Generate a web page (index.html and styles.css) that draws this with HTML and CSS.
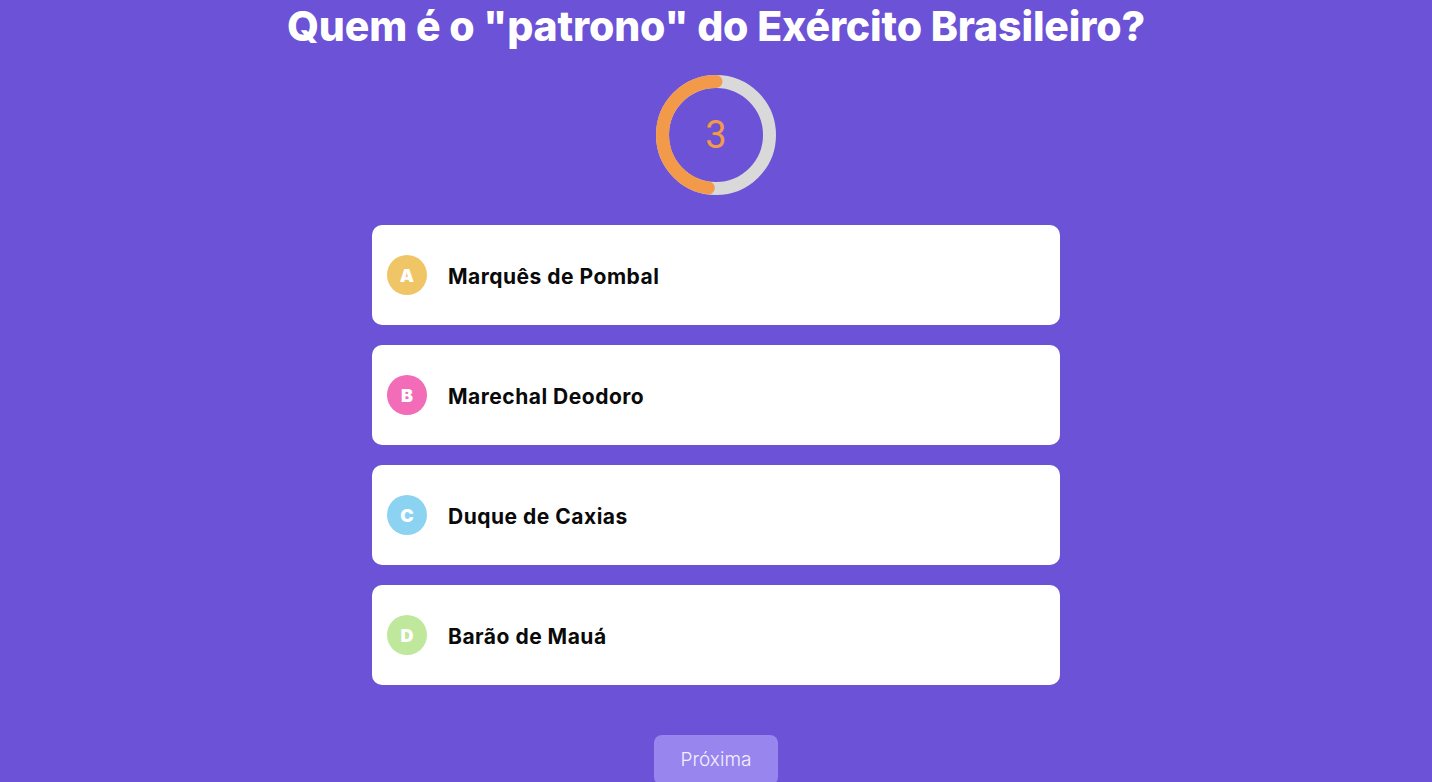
FILE: index.html
```html
<!DOCTYPE html>
<html lang="pt-BR">
<head>
<meta charset="utf-8">
<title>Quiz</title>
<link rel="stylesheet" href="styles.css">
</head>
<body>
<main class="quiz">
  <h1 class="question">Quem é o "patrono" do Exército Brasileiro?</h1>
  <div class="timer">
    <svg class="timer-ring" width="120" height="120" viewBox="0 0 120 120">
      <circle cx="60" cy="60" r="53.5" fill="none" stroke="#d9d9d9" stroke-width="13"/>
      <circle cx="60" cy="60" r="53.5" fill="none" stroke="#f2994a" stroke-width="13" stroke-linecap="round" stroke-dasharray="160 400" transform="translate(120 0) scale(-1 1) rotate(-90 60 60)"/>
    </svg>
    <span class="timer-value">3</span>
  </div>
  <ul class="options">
    <li class="option"><span class="badge badge-a">A</span><span class="option-text">Marquês de Pombal</span></li>
    <li class="option"><span class="badge badge-b">B</span><span class="option-text">Marechal Deodoro</span></li>
    <li class="option"><span class="badge badge-c">C</span><span class="option-text">Duque de Caxias</span></li>
    <li class="option"><span class="badge badge-d">D</span><span class="option-text">Barão de Mauá</span></li>
  </ul>
  <button class="next">Próxima</button>
</main>
</body>
</html>
```
FILE: styles.css
```css
* { box-sizing: border-box; }
html, body {
  margin: 0;
  padding: 0;
  background: #6b52d6;
  height: 100%;
  overflow: hidden;
}
body {
  font-family: "Inter", "Open Sans", sans-serif;
}
.quiz {
  display: flex;
  flex-direction: column;
  align-items: center;
}
.question {
  margin: 0;
  padding-top: 1px;
  height: 55px;
  color: #fff;
  font-size: 41px;
  font-weight: 800;
  line-height: 50px;
  letter-spacing: -0.15px;
  text-align: center;
}
.timer {
  position: relative;
  width: 120px;
  height: 120px;
  margin-top: 20px;
}
.timer-ring { display: block; }
.timer-value {
  position: absolute;
  inset: 0;
  display: flex;
  align-items: center;
  justify-content: center;
  color: #f2994a;
  font-family: "Roboto", sans-serif;
  font-weight: 400;
  font-size: 38px;
}
.options {
  list-style: none;
  margin: 30px 0 0;
  padding: 0;
  width: 688px;
  display: flex;
  flex-direction: column;
  gap: 20px;
}
.option {
  height: 100px;
  background: #fff;
  border-radius: 10px;
  display: flex;
  align-items: center;
  padding-left: 15px;
}
.badge {
  width: 40px;
  height: 40px;
  border-radius: 50%;
  display: flex;
  align-items: center;
  justify-content: center;
  color: #fff;
  font-weight: 900;
  font-size: 18px;
  margin-right: 21px;
}
.badge-a { background: #f0c566; }
.badge-b { background: #f26cb8; }
.badge-c { background: #8cd3f2; }
.badge-d { background: #bfe89c; }
.option-text {
  color: #0a0a0a;
  font-weight: 700;
  font-size: 21px;
  letter-spacing: 0.5px;
  line-height: 1;
  padding-top: 2px;
}
.next {
  margin-top: 50px;
  width: 124px;
  height: 50px;
  padding: 0 0 2px;
  border: none;
  border-radius: 8px;
  background: #9885ee;
  color: #f3f0ff;
  font-family: "Inter", sans-serif;
  font-weight: 300;
  font-size: 19px;
}
```
